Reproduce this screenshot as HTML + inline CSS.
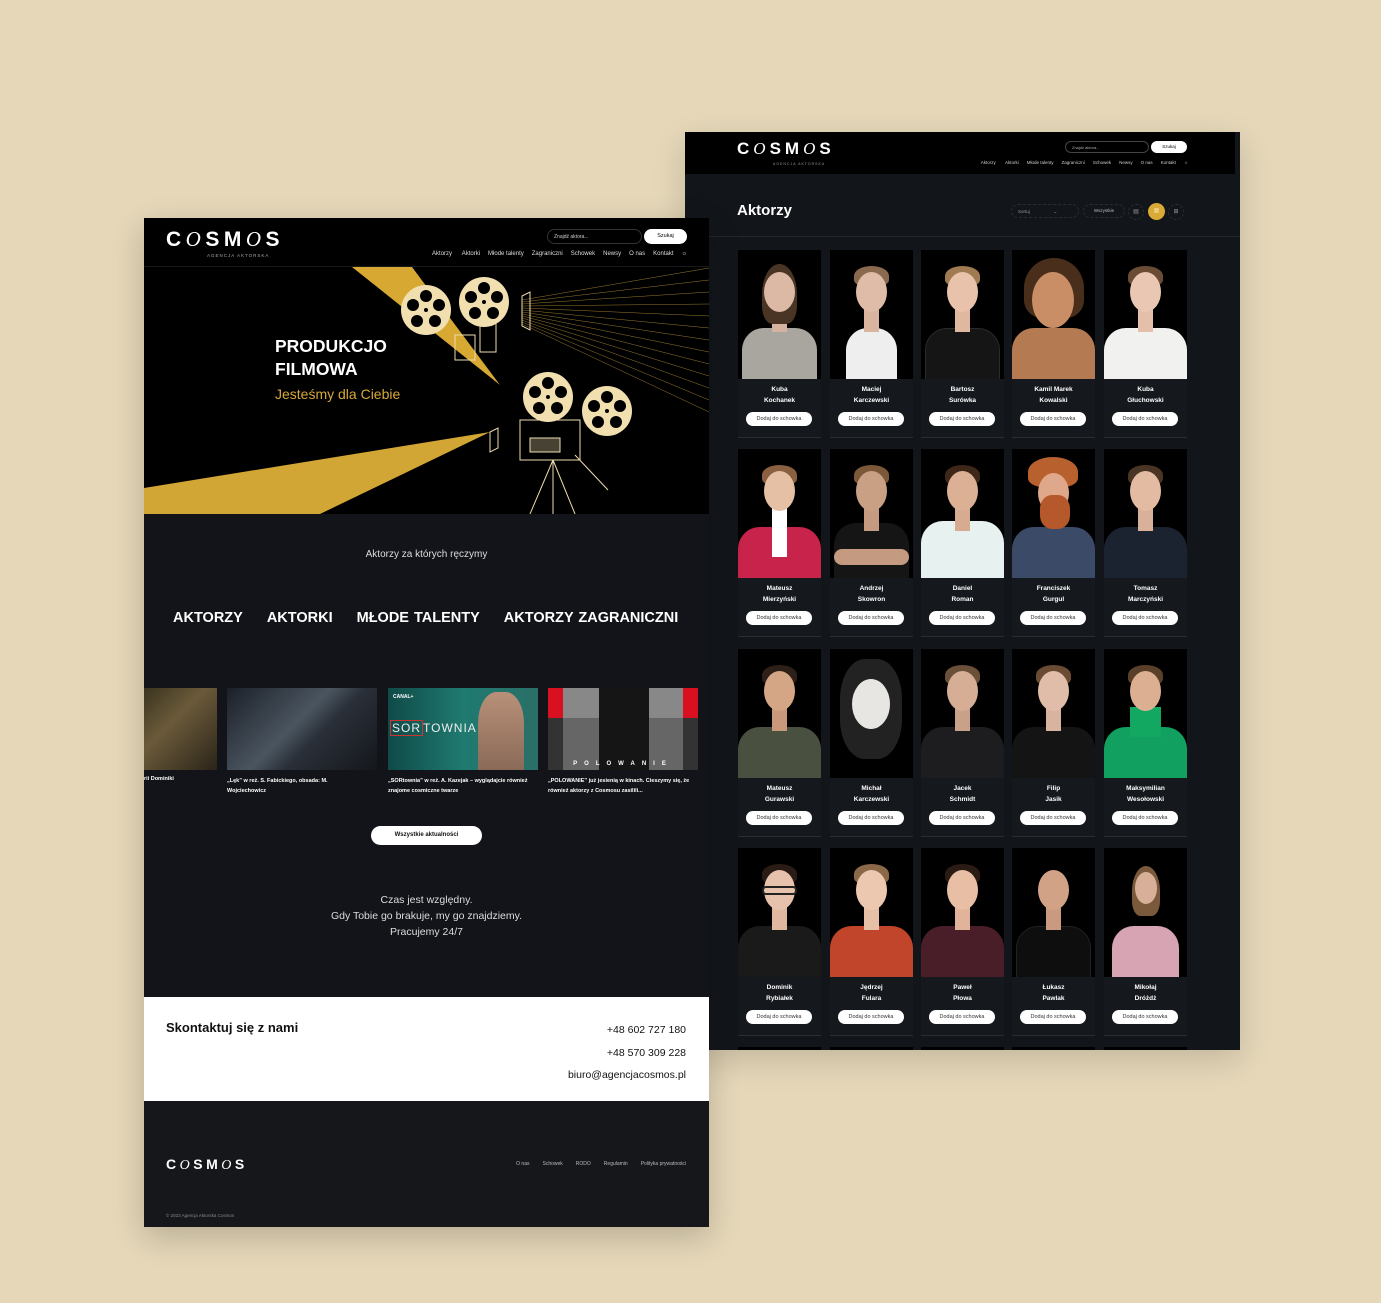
<!DOCTYPE html>
<html><head><meta charset="utf-8">
<style>
*{margin:0;padding:0;box-sizing:border-box}
body{width:1381px;height:1303px;background:#e5d7b8;position:relative;overflow:hidden;font-family:"Liberation Sans",sans-serif}
.abs{position:absolute}
.logo{color:#fff;font-weight:bold;letter-spacing:3.5px;white-space:nowrap}
.logo i{font-family:"Liberation Serif",serif;font-weight:normal}
#R{left:685px;top:132px;width:555px;height:918px;background:#12151a;overflow:hidden;box-shadow:0 10px 30px rgba(0,0,0,.15)}
#L{left:144px;top:218px;width:565px;height:1009px;background:#121419;overflow:hidden;box-shadow:0 10px 30px rgba(0,0,0,.2)}
.nav{color:#ddd;font-size:6px;white-space:nowrap}
.nav span{margin-left:8px}
.card{position:absolute;width:83px;height:188px;background:#15181d;border-bottom:1px solid #2a2d33}
.ph{position:absolute;left:0;top:0;width:83px;height:129px;background:#000;overflow:hidden}
.bd{position:absolute;left:4px;right:4px;top:78px;height:60px;border-radius:22px 22px 0 0}
.nk{position:absolute;left:34px;width:15px;top:58px;height:24px}
.hd{position:absolute;left:26px;width:31px;top:22px;height:40px;border-radius:50%}
.hr{position:absolute;left:24px;width:35px;top:16px;height:20px;border-radius:50% 50% 30% 30%}
.nm{position:absolute;top:134px;width:83px;text-align:center;color:#fff;font-size:6.5px;font-weight:bold;line-height:11px}
.bt{position:absolute;left:8px;top:162px;width:66px;height:14px;border-radius:7px;background:#fff;color:#333;font-size:5.5px;text-align:center;line-height:14px}
</style></head><body>

<!-- RIGHT PANEL -->
<div id="R" class="abs">
  <div class="abs" style="left:0;top:0;width:550px;height:42px;background:#000"></div>
  <div class="abs logo" style="left:52px;top:7px;font-size:17px;letter-spacing:4px">C<i>O</i>SM<i>O</i>S</div>
  <div class="abs" style="left:88px;top:30px;font-size:3.5px;color:#999;letter-spacing:1px">AGENCJA AKTORSKA</div>
  <div class="abs" style="left:380px;top:9px;width:84px;height:12px;border:1px solid #444;border-radius:6px;color:#aaa;font-size:4px;padding:3px 6px">Znajdź aktora...</div>
  <div class="abs" style="left:466px;top:9px;width:36px;height:12px;border-radius:6px;background:#fff;color:#000;font-size:4.5px;text-align:center;line-height:12px">Szukaj</div>
  <div class="abs nav" style="right:52px;top:28px;font-size:4.5px;color:#ccc">Aktorzy <span>Aktorki</span><span>Młode talenty</span><span>Zagraniczni</span><span>Schowek</span><span>Newsy</span><span>O nas</span><span>Kontakt</span><span>☼</span></div>
  <div class="abs" style="left:52px;top:70px;color:#fff;font-size:15px;font-weight:bold">Aktorzy</div>
  <div class="abs" style="left:326px;top:72px;width:68px;height:14px;border:1px dashed #2a2d33;border-radius:7px;color:#999;font-size:4.5px;padding:4px 6px">Sortuj &nbsp;&nbsp;&nbsp;&nbsp;&nbsp;&nbsp;&nbsp;&nbsp;&nbsp;&nbsp;&nbsp;&nbsp;&nbsp;&nbsp;&nbsp;&nbsp;&nbsp; ⌄</div>
  <div class="abs" style="left:398px;top:72px;width:42px;height:14px;border:1px dashed #2a2d33;border-radius:7px;color:#bbb;font-size:4.5px;text-align:center;line-height:12px">Wszystkie</div>
  <div class="abs" style="left:443px;top:72px;width:16px;height:16px;border:1px dashed #2a2d33;border-radius:8px;color:#999;font-size:6px;text-align:center;line-height:14px">▤</div>
  <div class="abs" style="left:463px;top:71px;width:17px;height:17px;border-radius:9px;background:#d9aa35;color:#f5dea0;font-size:6px;text-align:center;line-height:17px">▦</div>
  <div class="abs" style="left:483px;top:72px;width:16px;height:16px;border:1px dashed #2a2d33;border-radius:8px;color:#999;font-size:6px;text-align:center;line-height:14px">⊞</div>
  <div class="abs" style="left:24px;top:104px;width:531px;height:1px;background:#23262c"></div>
  <div class="abs" style="left:0;top:130px;width:24px;height:800px;background:#0a0b0e"></div>

  <!-- row 1 -->
  <div class="card" style="left:53px;top:118px"><div class="ph"><div class="bd" style="background:#a9a6a0"></div><div class="nk" style="background:#d6b3a0"></div><div class="hr" style="background:#4a3525;height:60px;top:14px"></div><div class="hd" style="background:#dcb9a5"></div></div><div class="nm">Kuba<br>Kochanek</div><div class="bt">Dodaj do schowka</div></div>
  <div class="card" style="left:145px;top:118px"><div class="ph"><div class="bd" style="background:#eee;left:16px;right:16px"></div><div class="nk" style="background:#d9b5a0"></div><div class="hr" style="background:#8a6a4e"></div><div class="hd" style="background:#dfbca8"></div></div><div class="nm">Maciej<br>Karczewski</div><div class="bt">Dodaj do schowka</div></div>
  <div class="card" style="left:236px;top:118px"><div class="ph"><div class="bd" style="background:#151515;border:1px solid #2a2a2a"></div><div class="nk" style="background:#e0b8a0"></div><div class="hr" style="background:#a07a50"></div><div class="hd" style="background:#e8c2aa"></div></div><div class="nm">Bartosz<br>Surówka</div><div class="bt">Dodaj do schowka</div></div>
  <div class="card" style="left:327px;top:118px"><div class="ph"><div class="bd" style="background:#b47a52;left:0;right:0"></div><div class="hr" style="background:#4a2e1c;left:12px;width:60px;height:60px;top:8px"></div><div class="hd" style="background:#c98e66;left:20px;width:42px;top:22px;height:56px"></div></div><div class="nm">Kamil Marek<br>Kowalski</div><div class="bt">Dodaj do schowka</div></div>
  <div class="card" style="left:419px;top:118px"><div class="ph"><div class="bd" style="background:#f1f1ef;left:0;right:0"></div><div class="nk" style="background:#e4c0aa"></div><div class="hr" style="background:#6a4c35"></div><div class="hd" style="background:#e9c7b3"></div></div><div class="nm">Kuba<br>Głuchowski</div><div class="bt">Dodaj do schowka</div></div>
  <!-- row 2 -->
  <div class="card" style="left:53px;top:317px"><div class="ph"><div class="bd" style="background:#c8234a;left:0;right:0"></div><div class="nk" style="background:#fff;height:50px"></div><div class="hr" style="background:#8a6040"></div><div class="hd" style="background:#e5c0a5"></div></div><div class="nm">Mateusz<br>Mierzyński</div><div class="bt">Dodaj do schowka</div></div>
  <div class="card" style="left:145px;top:317px"><div class="ph"><div class="bd" style="background:#151515;top:74px"></div><div class="abs" style="left:4px;right:4px;top:100px;height:16px;background:#c49a80;border-radius:8px"></div><div class="nk" style="background:#c49a80"></div><div class="hr" style="background:#7a5838"></div><div class="hd" style="background:#c9a084"></div></div><div class="nm">Andrzej<br>Skowron</div><div class="bt">Dodaj do schowka</div></div>
  <div class="card" style="left:236px;top:317px"><div class="ph"><div class="bd" style="background:#e6f1f0;left:0;right:0;top:72px"></div><div class="nk" style="background:#d6ab90"></div><div class="hr" style="background:#3e2718"></div><div class="hd" style="background:#dbb094"></div></div><div class="nm">Daniel<br>Roman</div><div class="bt">Dodaj do schowka</div></div>
  <div class="card" style="left:327px;top:317px"><div class="ph"><div class="bd" style="background:#3b4a66;left:0;right:0"></div><div class="hr" style="background:#b8602e;top:8px;height:30px;left:16px;width:50px"></div><div class="hd" style="background:#e0a88a;top:24px"></div><div class="abs" style="left:28px;width:30px;top:46px;height:34px;border-radius:40%;background:#b5582b"></div></div><div class="nm">Franciszek<br>Gurgul</div><div class="bt">Dodaj do schowka</div></div>
  <div class="card" style="left:419px;top:317px"><div class="ph"><div class="bd" style="background:#1c2330;left:0;right:0"></div><div class="nk" style="background:#d9b09a"></div><div class="hr" style="background:#4a3424"></div><div class="hd" style="background:#e3baa2"></div></div><div class="nm">Tomasz<br>Marczyński</div><div class="bt">Dodaj do schowka</div></div>
  <!-- row 3 -->
  <div class="card" style="left:53px;top:517px"><div class="ph"><div class="bd" style="background:#4a5040;left:0;right:0"></div><div class="nk" style="background:#c9987a"></div><div class="hr" style="background:#2e2018"></div><div class="hd" style="background:#d4a686"></div></div><div class="nm">Mateusz<br>Gurawski</div><div class="bt">Dodaj do schowka</div></div>
  <div class="card" style="left:145px;top:517px"><div class="ph"><div class="hr" style="background:#222;left:10px;width:62px;height:100px;top:10px;border-radius:40%"></div><div class="hd" style="background:#e8e6e2;left:22px;width:38px;height:50px;top:30px"></div></div><div class="nm">Michał<br>Karczewski</div><div class="bt">Dodaj do schowka</div></div>
  <div class="card" style="left:236px;top:517px"><div class="ph"><div class="bd" style="background:#1d1d20;left:0;right:0"></div><div class="nk" style="background:#c9a088"></div><div class="hr" style="background:#6a5038"></div><div class="hd" style="background:#d5ae95"></div></div><div class="nm">Jacek<br>Schmidt</div><div class="bt">Dodaj do schowka</div></div>
  <div class="card" style="left:327px;top:517px"><div class="ph"><div class="bd" style="background:#141414;left:0;right:0"></div><div class="nk" style="background:#d8b4a0"></div><div class="hr" style="background:#6a4c34"></div><div class="hd" style="background:#e0bda8"></div></div><div class="nm">Filip<br>Jasik</div><div class="bt">Dodaj do schowka</div></div>
  <div class="card" style="left:419px;top:517px"><div class="ph"><div class="bd" style="background:#11a060;left:0;right:0"></div><div class="nk" style="background:#13a862;height:30px;left:26px;width:31px"></div><div class="hr" style="background:#5a4028"></div><div class="hd" style="background:#dcae92"></div></div><div class="nm">Maksymilian<br>Wesołowski</div><div class="bt">Dodaj do schowka</div></div>
  <!-- row 4 -->
  <div class="card" style="left:53px;top:716px"><div class="ph"><div class="bd" style="background:#1a1a1a;left:0;right:0"></div><div class="nk" style="background:#e0b8a0"></div><div class="hr" style="background:#2a1c14"></div><div class="hd" style="background:#e6c2ac"></div><div class="abs" style="left:24px;top:38px;width:35px;height:9px;border:2px solid #222;border-radius:4px"></div></div><div class="nm">Dominik<br>Rybiałek</div><div class="bt">Dodaj do schowka</div></div>
  <div class="card" style="left:145px;top:716px"><div class="ph"><div class="bd" style="background:#c0452a;left:0;right:0"></div><div class="nk" style="background:#e6c0a6"></div><div class="hr" style="background:#8a6848"></div><div class="hd" style="background:#ecc8b0"></div></div><div class="nm">Jędrzej<br>Fulara</div><div class="bt">Dodaj do schowka</div></div>
  <div class="card" style="left:236px;top:716px"><div class="ph"><div class="bd" style="background:#4a1e28;left:0;right:0"></div><div class="nk" style="background:#e0b39a"></div><div class="hr" style="background:#2a1c14"></div><div class="hd" style="background:#e8bea4"></div></div><div class="nm">Paweł<br>Płowa</div><div class="bt">Dodaj do schowka</div></div>
  <div class="card" style="left:327px;top:716px"><div class="ph"><div class="bd" style="background:#0e0e0e;border:1px solid #222"></div><div class="nk" style="background:#c99a80"></div><div class="hd" style="background:#d2a286"></div></div><div class="nm">Łukasz<br>Pawlak</div><div class="bt">Dodaj do schowka</div></div>
  <div class="card" style="left:419px;top:716px"><div class="ph"><div class="bd" style="background:#d7a4b4;left:8px;right:8px"></div><div class="hr" style="background:#7a5a3a;height:50px;left:28px;width:28px;top:18px"></div><div class="hd" style="background:#d8b09a;left:31px;width:22px;top:24px;height:32px"></div></div><div class="nm">Mikołaj<br>Dróżdż</div><div class="bt">Dodaj do schowka</div></div>
  <!-- row 5 partial -->
  <div class="card" style="left:53px;top:915px"><div class="ph"></div></div>
  <div class="card" style="left:145px;top:915px"><div class="ph"></div></div>
  <div class="card" style="left:236px;top:915px"><div class="ph"></div></div>
  <div class="card" style="left:327px;top:915px"><div class="ph"></div></div>
  <div class="card" style="left:419px;top:915px"><div class="ph"></div></div>
</div>

<!-- LEFT PANEL -->
<div id="L" class="abs">
  <div class="abs" style="left:0;top:0;width:565px;height:296px;background:#000"></div>
  <div class="abs logo" style="left:22px;top:9px;font-size:21px;letter-spacing:4.5px">C<i>O</i>SM<i>O</i>S</div>
  <div class="abs" style="left:63px;top:35px;font-size:4.5px;color:#aaa;letter-spacing:1px">AGENCJA AKTORSKA</div>
  <div class="abs" style="left:403px;top:11px;width:95px;height:15px;border:1px solid #333;border-radius:8px;color:#ccc;font-size:5px;padding:4px 6px">Znajdź aktora...</div>
  <div class="abs" style="left:500px;top:11px;width:43px;height:15px;border-radius:8px;background:#fff;color:#000;font-size:5.5px;text-align:center;line-height:15px">Szukaj</div>
  <div class="abs nav" style="right:22px;top:33px">Aktorzy <span>Aktorki</span><span>Młode talenty</span><span>Zagraniczni</span><span>Schowek</span><span>Newsy</span><span>O nas</span><span>Kontakt</span><span>☼</span></div>
  <div class="abs" style="left:0;top:48px;width:565px;height:1px;background:#1a1a1a"></div>
  <svg class="abs" style="left:0;top:49px" width="565" height="247" viewBox="144 267 565 247">
    <polygon points="352,267 412,267 500,385" fill="#d7a933"/>
    <polygon points="144,488 144,514 320,514 490,432" fill="#d2a634"/>
    <g stroke="#c09a3a" stroke-width="0.5" opacity="0.8">
      <line x1="522" y1="300" x2="709" y2="268"/><line x1="522" y1="302" x2="709" y2="280"/><line x1="522" y1="304" x2="709" y2="292"/><line x1="522" y1="306" x2="709" y2="304"/><line x1="522" y1="308" x2="709" y2="316"/><line x1="522" y1="310" x2="709" y2="328"/><line x1="522" y1="312" x2="709" y2="340"/><line x1="522" y1="314" x2="709" y2="352"/><line x1="522" y1="316" x2="709" y2="364"/><line x1="522" y1="318" x2="709" y2="376"/><line x1="522" y1="320" x2="709" y2="388"/><line x1="522" y1="322" x2="709" y2="400"/><line x1="522" y1="324" x2="709" y2="412"/>
    </g>
    <g fill="none" stroke="#eedcae" stroke-width="1">
      <polygon points="522,296 530,292 530,330 522,326"/><rect x="480" y="322" width="16" height="30"/><rect x="455" y="335" width="20" height="25"/>
      <polygon points="490,432 498,428 498,448 490,452"/><rect x="520" y="420" width="60" height="40"/><rect x="530" y="438" width="30" height="14" fill="#eedcae" fill-opacity=".3"/>
      <line x1="553" y1="460" x2="530" y2="514"/><line x1="553" y1="460" x2="553" y2="514"/><line x1="553" y1="460" x2="575" y2="514"/><line x1="575" y1="455" x2="608" y2="490"/>
    </g>
    <g fill="#f1dfb0">
      <circle cx="426" cy="310" r="25"/><circle cx="484" cy="302" r="25"/><circle cx="548" cy="397" r="25"/><circle cx="607" cy="411" r="25"/>
    </g>
    <g fill="#000">
      <circle cx="426" cy="296" r="6"/><circle cx="439" cy="305" r="6"/><circle cx="435" cy="321" r="6"/><circle cx="417" cy="321" r="6"/><circle cx="413" cy="305" r="6"/><circle cx="426" cy="310" r="2"/>
      <circle cx="484" cy="288" r="6"/><circle cx="497" cy="297" r="6"/><circle cx="493" cy="313" r="6"/><circle cx="475" cy="313" r="6"/><circle cx="471" cy="297" r="6"/><circle cx="484" cy="302" r="2"/>
      <circle cx="548" cy="383" r="6"/><circle cx="561" cy="392" r="6"/><circle cx="557" cy="408" r="6"/><circle cx="539" cy="408" r="6"/><circle cx="535" cy="392" r="6"/><circle cx="548" cy="397" r="2"/>
      <circle cx="607" cy="397" r="6"/><circle cx="620" cy="406" r="6"/><circle cx="616" cy="422" r="6"/><circle cx="598" cy="422" r="6"/><circle cx="594" cy="406" r="6"/><circle cx="607" cy="411" r="2"/>
    </g>
  </svg>
  <div class="abs" style="left:131px;top:117px;color:#fff;font-size:17.5px;font-weight:bold;line-height:23px">PRODUKCJO<br>FILMOWA</div>
  <div class="abs" style="left:131px;top:168px;color:#d6a93a;font-size:14px">Jesteśmy dla Ciebie</div>

  <div class="abs" style="left:0;top:331px;width:565px;text-align:center;color:#ddd;font-size:10px">Aktorzy za których ręczymy</div>
  <div class="abs" style="left:29px;top:392px;color:#fff;font-size:14.5px;font-weight:bold;word-spacing:1px;white-space:nowrap">AKTORZY<span style="margin-left:24px">AKTORKI</span><span style="margin-left:24px">MŁODE TALENTY</span><span style="margin-left:24px">AKTORZY ZAGRANICZNI</span></div>

  <div class="abs" style="left:0;top:470px;width:73px;height:82px;background:linear-gradient(135deg,#3a3420,#6b5a3a 40%,#2a2418)"></div>
  <div class="abs" style="left:83px;top:470px;width:150px;height:82px;background:linear-gradient(135deg,#1c2028,#4a5560 45%,#2a2f38 60%,#14171c)"></div>
  <div class="abs" style="left:244px;top:470px;width:150px;height:82px;background:linear-gradient(90deg,#0f4a48,#1f7a70 50%,#2a6f68)"></div>
  <div class="abs" style="left:249px;top:476px;color:#fff;font-size:5px;font-weight:bold">CANAL+</div>
  <div class="abs" style="left:246px;top:503px;color:#eee;font-size:12px;letter-spacing:1px"><span style="border:1px solid #c33;padding:0 1px">SOR</span>TOWNIA</div>
  <div class="abs" style="left:334px;top:474px;width:46px;height:78px;border-radius:40% 40% 0 0;background:linear-gradient(#b89078,#8a6a58)"></div>
  <div class="abs" style="left:404px;top:470px;width:150px;height:82px;background:linear-gradient(90deg,#d81020 0 10%,#888 10% 90%,#d81020 90%)"></div>
  <div class="abs" style="left:404px;top:500px;width:150px;height:52px;background:linear-gradient(90deg,#333 0 10%,#666 10% 90%,#333 90%)"></div>
  <div class="abs" style="left:455px;top:470px;width:50px;height:82px;background:#151515"></div>
  <div class="abs" style="left:404px;top:543px;width:150px;text-align:center;color:#fff;font-size:6px;letter-spacing:7px;font-weight:bold">POLOWANIE</div>
  <div class="abs" style="left:0;top:558px;color:#fff;font-size:5.5px;font-weight:bold">rii Dominiki</div>
  <div class="abs" style="left:83px;top:558px;width:130px;color:#fff;font-size:5.5px;font-weight:bold;line-height:10px">„Lęk” w reż. S. Fabickiego, obsada: M. Wojciechowicz</div>
  <div class="abs" style="left:244px;top:558px;width:150px;color:#fff;font-size:5.5px;font-weight:bold;line-height:10px">„SORtownia” w reż. A. Kazejak – wyglądajcie również znajome cosmiczne twarze</div>
  <div class="abs" style="left:404px;top:558px;width:152px;color:#fff;font-size:5.5px;font-weight:bold;line-height:10px">„POLOWANIE” już jesienią w kinach. Cieszymy się, że również aktorzy z Cosmosu zasilili...</div>
  <div class="abs" style="left:227px;top:608px;width:111px;height:19px;border-radius:10px;background:#fff;color:#111;font-size:6px;font-weight:bold;text-align:center;line-height:19px">Wszystkie aktualności</div>

  <div class="abs" style="left:0;top:674px;width:565px;text-align:center;color:#ddd;font-size:10.5px;line-height:16px">Czas jest względny.<br>Gdy Tobie go brakuje, my go znajdziemy.<br>Pracujemy 24/7</div>

  <div class="abs" style="left:0;top:779px;width:565px;height:104px;background:#fff"></div>
  <div class="abs" style="left:22px;top:802px;color:#111;font-size:13px;font-weight:bold">Skontaktuj się z nami</div>
  <div class="abs" style="right:23px;top:801px;color:#111;font-size:10.5px;text-align:right;line-height:22.5px">+48 602 727 180<br>+48 570 309 228<br>biuro@agencjacosmos.pl</div>

  <div class="abs" style="left:0;top:883px;width:565px;height:126px;background:#16171b"></div>
  <div class="abs logo" style="left:22px;top:938px;font-size:14px">C<i>O</i>SM<i>O</i>S</div>
  <div class="abs nav" style="right:23px;top:943px;font-size:5px;color:#bbb">O nas<span style="margin-left:13px">Schowek</span><span style="margin-left:13px">RODO</span><span style="margin-left:13px">Regulamin</span><span style="margin-left:13px">Polityka prywatności</span></div>
  <div class="abs" style="left:22px;top:995px;color:#888;font-size:4.5px">© 2023 Agencja Aktorska Cosmos</div>
</div>
</body></html>
